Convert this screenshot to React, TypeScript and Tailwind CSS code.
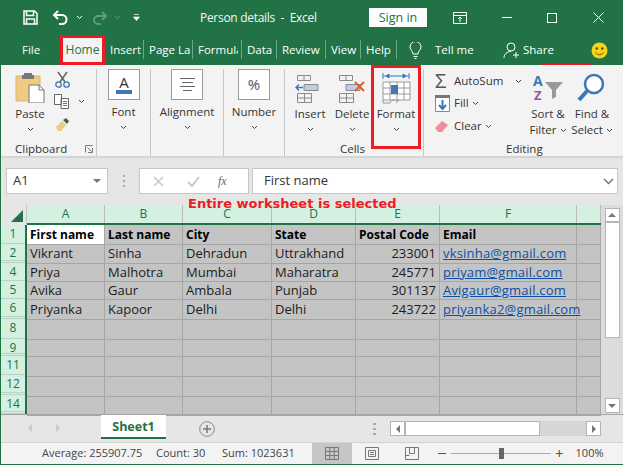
import React from 'react';

const tabs = [
  { label: 'Insert', w: 'w-[39px]', clip: 'w-[33px]' },
  { label: 'Page La', w: 'w-[49px]', clip: 'w-[41px]' },
  { label: 'Formula', w: 'w-[49px]', clip: 'w-[40px]' },
  { label: 'Data', w: 'w-[35px]', clip: 'w-[29px]' },
  { label: 'Review', w: 'w-[49px]', clip: 'w-[43px]' },
  { label: 'View', w: 'w-[35px]', clip: 'w-[29px]' },
  { label: 'Help', w: 'w-[36px]', clip: 'w-[30px]' },
];

const columns = ['A', 'B', 'C', 'D', 'E', 'F', ''];

const rowNumbers = [
  { n: '1', h: 'h-[20px] border-b' },
  { n: '2', h: 'h-[19px] border-b-[3px] border-double' },
  { n: '4', h: 'h-[18px] border-b' },
  { n: '5', h: 'h-[18px] border-b' },
  { n: '6', h: 'h-[20px] border-b-[3px] border-double' },
  { n: '8', h: 'h-[20px] border-b' },
  { n: '9', h: 'h-[17px] border-b-[3px] border-double' },
  { n: '11', h: 'h-[20px] border-b' },
  { n: '12', h: 'h-[20px] border-b-[3px] border-double' },
  { n: '14', h: 'h-[19px] border-b-[3px] border-double' },
];

const data = [
  ['First name', 'Last name', 'City', 'State', 'Postal Code', 'Email'],
  ['Vikrant', 'Sinha', 'Dehradun', 'Uttrakhand', '233001', 'vksinha@gmail.com'],
  ['Priya', 'Malhotra', 'Mumbai', 'Maharatra', '245771', 'priyam@gmail.com'],
  ['Avika', 'Gaur', 'Ambala', 'Punjab', '301137', 'Avigaur@gmail.com'],
  ['Priyanka', 'Kapoor', 'Delhi', 'Delhi', '243722', 'priyanka2@gmail.com'],
  [],
  [],
  [],
  [],
  [],
];

function Caret({ className = '' }: { className?: string }) {
  return (
    <svg width="7" height="5" viewBox="0 0 7 5" className={className}>
      <path d="M1 1l2.500 2.500L6 1" fill="none" stroke="#444" strokeWidth="1" />
    </svg>
  );
}

function Tab({ label, w, clip }: { label: string; w: string; clip: string }) {
  return (
    <div className={`${w} h-[19px] border-r border-[#6fa58a] pl-[5px] text-white text-[11.5px] leading-[19px]`}>
      <div className={`${clip} overflow-hidden whitespace-nowrap`}>{label}</div>
    </div>
  );
}

function BoxButton({ label, children, w }: { label: string; children: React.ReactNode; w: string }) {
  return (
    <div className={`${w} h-[87px] border-r border-[#c6c6c6] flex flex-col items-center shrink-0`}>
      <div className="w-[32px] h-[31px] bg-white border border-[#9a9a9a] flex items-center justify-center">{children}</div>
      <div className="text-[11.5px] leading-[16px] mt-[4px] text-[#333]">{label}</div>
      <Caret className="mt-[5px]" />
    </div>
  );
}

function TableIcon({ mark }: { mark?: boolean }) {
  return (
    <svg width="30" height="30" viewBox="0 0 30 30">
      <g fill="none" stroke="#8a8a8a">
        <path d="M2.500 2.500h13v5h-13zM2.500 20.500h14v9h-14zM9.500 20.500v9M2.500 25h14" />
        <path d="M9 2.500v5" />
      </g>
      <path d="M9 11.500h14v6H9z" fill="#b9cfe6" stroke="#8a8a8a" />
      {mark ? (
        <path d="M18 9l9 9M27 9l-9 9" stroke="#d9633a" strokeWidth="2" />
      ) : (
        <path d="M8 14.500H1M4 11.500l-3 3 3 3" stroke="#3b78b9" strokeWidth="1.500" fill="none" />
      )}
    </svg>
  );
}

function Cell({ value, row, col }: { value?: string; row: number; col: number }) {
  const first = row === 0 && col === 0;
  const link = col === 5 && row > 0;
  const number = col === 4 && row > 0;
  return (
    <div
      className={`flex items-center border-r border-b border-[#a6a6a6] px-[3px] whitespace-nowrap ${first ? 'bg-white' : 'bg-[#c4c4c4]'} ${row === 0 ? 'font-bold text-black text-[12px]' : 'text-[#1c1c1c] text-[13px]'} ${number ? 'justify-end' : ''}`}
    >
      {link ? <span className="relative z-10 text-[#0b4fa6] underline tracking-[0.2px]">{value}</span> : value}
    </div>
  );
}

export default function App() {
  return (
    <div
      className="w-[623px] h-[465px] flex flex-col overflow-hidden relative border-l border-b border-[#217346] bg-[#e6e6e6] text-[#333]"
      style={{ fontFamily: '"Open Sans", "Noto Sans", sans-serif' }}
    >
      {/* title bar */}
      <div className="h-[35px] -ml-px bg-[#217346] flex items-center text-white shrink-0 [&>*]:shrink-0">
        <div className="w-[23px]" />
        <svg width="15" height="15" viewBox="0 0 15 15">
          <path d="M1 1h10.500L14 3.500V14H1z" fill="none" stroke="#fff" strokeWidth="1.500" />
          <path d="M3.500 1v4.500h7V1M3.500 14V9h8v5" fill="none" stroke="#fff" strokeWidth="1.500" />
        </svg>
        <svg width="17" height="15" viewBox="0 0 17 15" className="ml-[14px]">
          <path d="M6 1L2 5l4 4M2 5h8a4.500 4.500 0 0 1 0 9H7" fill="none" stroke="#fff" strokeWidth="2" />
        </svg>
        <svg width="7" height="5" viewBox="0 0 7 5" className="ml-[7px]">
          <path d="M1 1l2.500 2.500L6 1" fill="none" stroke="#fff" />
        </svg>
        <svg width="15" height="14" viewBox="0 0 15 14" className="ml-[9px]">
          <path d="M10 1l4 4-4 4M14 5H6a4 4 0 0 0 0 8h3" fill="none" stroke="#5f9a7d" strokeWidth="2" />
        </svg>
        <svg width="7" height="5" viewBox="0 0 7 5" className="ml-[7px]">
          <path d="M1 1l2.500 2.500L6 1" fill="none" stroke="#5f9a7d" />
        </svg>
        <svg width="7" height="7" viewBox="0 0 7 7" className="ml-[12px]">
          <path d="M1 0.500h5M0.500 3h6L3.500 6.500z" fill="#fff" stroke="#fff" strokeWidth="0.700" />
        </svg>
        <div className="w-[169px] ml-[60px] text-[12px] tracking-[-0.3px] whitespace-pre text-[#f2f7f4]">Person details  -  Excel</div>
        <div className="w-[58px] h-[19px] bg-white text-[#217346] text-[12.5px] leading-[19px] text-center">Sign in</div>
        <svg width="14" height="12" viewBox="0 0 14 12" className="ml-[26px]">
          <path d="M.5 3.500h13v8H.5zM.5.500h13v3H.5zM7 10V5M5 7l2-2 2 2" fill="none" stroke="#fff" />
        </svg>
        <div className="w-[10px] h-px bg-white ml-[35px]" />
        <div className="w-[10px] h-[10px] border border-white ml-[35px]" />
        <svg width="11" height="11" viewBox="0 0 11 11" className="ml-[36px]">
          <path d="M.5.500l10 10M10.500.500l-10 10" stroke="#fff" />
        </svg>
      </div>

      {/* tab row */}
      <div className="h-[30px] -ml-px bg-[#217346] flex items-start shrink-0 relative [&>*]:shrink-0">
        <div className="w-[60px] pl-[22px] pt-[5px] text-white text-[11.5px] leading-[19px]">File</div>
        <div className="w-[45px] h-[30px] bg-[#f3f3f3] border-[3px] border-[#ed1c24] text-[#217346] text-[12px] leading-[24px] text-center">Home</div>
        <div className="flex pt-[5px]">
          {tabs.map((t) => (
            <Tab key={t.label} label={t.label} w={t.w} clip={t.clip} />
          ))}
        </div>
        <svg width="13" height="17" viewBox="0 0 13 17" className="ml-[12px] mt-[7px]">
          <path d="M4 12c0-3-3-4-3-7a5.500 5.500 0 0 1 11 0c0 3-3 4-3 7zM4.500 14.500h4M5.500 16.500h2" fill="none" stroke="#fff" />
        </svg>
        <div className="w-[38px] ml-[13px] pt-[5px] text-white text-[11.5px] leading-[19px] whitespace-nowrap">Tell me</div>
        <svg width="17" height="17" viewBox="0 0 17 17" className="ml-[30px] mt-[7px]">
          <circle cx="8" cy="5" r="4" fill="none" stroke="#fff" />
          <path d="M1 16c0-4 3-6.500 7-6.500M13 10v6M10 13h6" fill="none" stroke="#fff" />
        </svg>
        <div className="w-[30px] ml-[3px] pt-[5px] text-white text-[11.5px] leading-[19px]">Share</div>
        <svg width="17" height="17" viewBox="0 0 17 17" className="ml-[38px] mt-[7px]">
          <circle cx="8.500" cy="8.500" r="8" fill="#f6d21e" />
          <circle cx="5.800" cy="6.500" r="1.200" fill="#5a4a00" />
          <circle cx="11.200" cy="6.500" r="1.200" fill="#5a4a00" />
          <path d="M4.500 10.500c2 3 6 3 8 0" fill="none" stroke="#5a4a00" />
        </svg>
        <div className="absolute left-[541px] bottom-0 w-[50px] h-px bg-[#ed1c24]" />
      </div>

      {/* ribbon */}
      <div className="h-[93px] bg-[#f3f3f3] border-b-2 border-[#d4d4d4] flex shrink-0 pt-[4px]">
        <div className="w-[96px] h-[87px] border-r border-[#c6c6c6] relative shrink-0 flex">
          <div className="w-[58px] flex flex-col items-center pt-[3px]">
            <svg width="30" height="31" viewBox="0 0 30 31">
              <path d="M1 4h24v25H1z" fill="#eecb82" stroke="#dcb76a" />
              <path d="M9 3V1h8v2h2v4H7V3z" fill="#777" />
              <path d="M14 13h10l5 5v13H14z" fill="#fff" stroke="#777" />
              <path d="M24 13v5h5" fill="none" stroke="#777" />
            </svg>
            <div className="text-[11.5px] leading-[16px] mt-[3px]">Paste</div>
            <Caret className="mt-[5px]" />
          </div>
          <div className="flex flex-col items-start pt-[2px] -ml-[4px]">
            <svg width="15" height="17" viewBox="0 0 15 17">
              <path d="M3 1l7 10M12 1L5 11" stroke="#666" strokeWidth="1.500" />
              <circle cx="3.500" cy="13.500" r="2.700" fill="none" stroke="#3b78b9" strokeWidth="1.300" />
              <circle cx="11.500" cy="13.500" r="2.700" fill="none" stroke="#3b78b9" strokeWidth="1.300" />
            </svg>
            <div className="flex items-center mt-[6px] -ml-[1px]">
              <svg width="16" height="15" viewBox="0 0 16 15">
                <path d="M.5.500h7v10h-7zM7 4.500h7.500v10H7z" fill="#fff" stroke="#666" />
                <path d="M9 7.500h4M9 9.500h4M9 11.500h4" stroke="#3b78b9" />
              </svg>
              <Caret className="ml-[8px]" />
            </div>
            <svg width="16" height="15" viewBox="0 0 16 15" className="mt-[8px]">
              <path d="M1 10l6-6 4 4-5 6H3z" fill="#eecb82" />
              <path d="M8 3l3-2 3 3-2 3z" fill="#555" />
            </svg>
          </div>
          <div className="absolute left-[14px] bottom-0 text-[11.5px] leading-[14px]">Clipboard</div>
          <svg width="8" height="8" viewBox="0 0 8 8" className="absolute right-[3px] bottom-[3px]">
            <path d="M.5 7.500v-7h7M7.500 3v4.500H3M2.500 2.500l4 4" fill="none" stroke="#777" />
          </svg>
        </div>

        <BoxButton label="Font" w="w-[54px]">
          <svg width="18" height="20" viewBox="0 0 18 20">
            <text x="9" y="13" textAnchor="middle" fontSize="15" fill="#333" fontFamily="Open Sans">A</text>
            <rect x="1" y="15" width="16" height="4" fill="#3f78b5" />
          </svg>
        </BoxButton>
        <BoxButton label="Alignment" w="w-[73px]">
          <svg width="15" height="13" viewBox="0 0 15 13">
            <path d="M0 .5h15M2 4.500h11M0 8.500h15M3 12.500h9" stroke="#666" />
          </svg>
        </BoxButton>
        <BoxButton label="Number" w="w-[61px]">
          <span className="text-[15px] text-[#555]">%</span>
        </BoxButton>

        {/* cells */}
        <div className="w-[139px] h-[87px] border-r border-[#c6c6c6] shrink-0 relative flex">
          <div className="w-[50px] flex flex-col items-center pt-[4px]">
            <TableIcon />
            <div className="text-[11.5px] leading-[16px] mt-[3px]">Insert</div>
            <Caret className="mt-[5px]" />
          </div>
          <div className="w-[34px] flex flex-col items-center pt-[4px]">
            <TableIcon mark />
            <div className="text-[11.5px] leading-[16px] mt-[3px]">Delete</div>
            <Caret className="mt-[5px]" />
          </div>
          <div className="w-[50px] h-[84px] -mt-[4px] ml-[2px] border-[3px] border-[#ed1c24] flex flex-col items-center pt-[3px]">
            <svg width="29" height="33" viewBox="0 0 29 33">
              <path d="M1 5h26M1 2v6M27 2v6M4 5l3-2v4zM24 5l-3-2v4z" fill="#3b78b9" stroke="#3b78b9" />
              <path d="M1 11h27v18H1zM1 17h27M1 23h27M8 11v18M15 11v18M22 11v18" fill="#fff" stroke="#9a9a9a" />
              <rect x="9" y="14" width="7" height="9" fill="#3f78b5" />
              <path d="M1 29v3h7l2-3h7l-3 3" fill="none" stroke="#9a9a9a" />
            </svg>
            <div className="text-[11.5px] leading-[16px] mt-[2px]">Format</div>
            <Caret className="mt-[5px]" />
          </div>
          <div className="absolute left-[55px] bottom-0 text-[11.5px] leading-[14px]">Cells</div>
        </div>

        {/* editing */}
        <div className="flex-1 h-[87px] relative flex">
          <div className="w-[100px] pl-[11px] pt-[2px] flex flex-col">
            <div className="flex items-center h-[20px]">
              <span className="w-[20px] text-[20px] leading-[20px] text-[#555]">Σ</span>
              <span className="text-[11.5px] ml-[-1px]">AutoSum</span>
              <Caret className="ml-[12px]" />
            </div>
            <div className="flex items-center h-[24px]">
              <svg width="15" height="17" viewBox="0 0 15 17">
                <path d="M.5 2.500h14v14H.5z" fill="#fff" stroke="#888" />
                <path d="M0 0h15v3H0z" fill="#777" />
                <path d="M7.500 5v9M4 10l3.500 4 3.500-4" fill="none" stroke="#3b78b9" strokeWidth="2" />
              </svg>
              <span className="text-[11.5px] ml-[4px]">Fill</span>
              <Caret className="ml-[3px]" />
            </div>
            <div className="flex items-center h-[22px]">
              <svg width="14" height="11" viewBox="0 0 14 11">
                <path d="M0 7l7-7 6 4-6 7H3z" fill="#ee8d9b" />
              </svg>
              <span className="text-[11.5px] ml-[5px]">Clear</span>
              <Caret className="ml-[3px]" />
            </div>
          </div>
          <div className="w-[48px] flex flex-col items-center pt-[4px]">
            <svg width="40" height="30" viewBox="0 0 40 30">
              <text x="5" y="13" fontSize="14" fontWeight="700" fill="#3b78b9" fontFamily="Open Sans">A</text>
              <text x="6" y="27" fontSize="13" fontWeight="700" fill="#8a5cb0" fontFamily="Open Sans">Z</text>
              <path d="M17 9h18l-7 8v7l-4 2v-9z" fill="#999" />
            </svg>
            <div className="text-[11.5px] leading-[16px] mt-[3px]">Sort &amp;</div>
            <div className="text-[11.5px] leading-[16px] whitespace-nowrap">Filter <Caret className="inline" /></div>
          </div>
          <div className="w-[40px] flex flex-col items-center pt-[4px]">
            <svg width="30" height="30" viewBox="0 0 30 30">
              <circle cx="17" cy="11" r="9" fill="#fff" stroke="#3b78b9" strokeWidth="2.500" />
              <path d="M10 18L2 27" stroke="#3b78b9" strokeWidth="4" />
            </svg>
            <div className="text-[11.5px] leading-[16px] mt-[3px] whitespace-nowrap">Find &amp;</div>
            <div className="text-[11.5px] leading-[16px] whitespace-nowrap">Select <Caret className="inline" /></div>
          </div>
          <div className="absolute left-[82px] bottom-0 text-[11.5px] leading-[14px]">Editing</div>
        </div>
      </div>

      {/* formula bar */}
      <div className="h-[47px] flex items-start pt-[10px] pl-[5px] shrink-0">
        <div className="w-[102px] h-[26px] bg-white border border-[#c6c6c6] flex items-center justify-between px-[6px]">
          <span className="text-[13px]">A1</span>
          <div className="w-0 h-0 border-l-[4px] border-r-[4px] border-t-[4px] border-l-transparent border-r-transparent border-t-[#777]" />
        </div>
        <div className="w-[31px] h-[26px] flex flex-col items-center justify-center gap-[3px]">
          <div className="w-[2px] h-[2px] bg-[#aaa]" />
          <div className="w-[2px] h-[2px] bg-[#aaa]" />
          <div className="w-[2px] h-[2px] bg-[#aaa]" />
        </div>
        <div className="w-[110px] h-[26px] bg-white border border-[#c6c6c6] flex items-center pl-[13px]">
          <svg width="11" height="11" viewBox="0 0 11 11">
            <path d="M1 1l9 9M10 1l-9 9" stroke="#c8c8c8" strokeWidth="1.500" />
          </svg>
          <svg width="13" height="11" viewBox="0 0 13 11" className="ml-[23px]">
            <path d="M1 6l4 4 7-9" fill="none" stroke="#c8c8c8" strokeWidth="2" />
          </svg>
          <span className="ml-[18px] text-[12px] italic text-[#666]" style={{ fontFamily: '"Liberation Serif", serif' }}>fx</span>
        </div>
        <div className="w-[366px] h-[26px] ml-[3px] bg-white border border-[#c6c6c6] flex items-center justify-between pl-[11px] pr-[3px]">
          <span className="text-[13px]">First name</span>
          <svg width="11" height="7" viewBox="0 0 11 7">
            <path d="M1 1l4.500 4.500L10 1" fill="none" stroke="#777" strokeWidth="1.500" />
          </svg>
        </div>
      </div>

      {/* sheet */}
      <div className="flex-1 min-h-0 flex">
        <div className="flex-1 flex flex-col">
          <div className="flex h-[20px] shrink-0">
            <div className="w-[26px] h-[20px] border-r border-[#c6c6c6] bg-[#e6e6e6] flex items-end justify-end pb-[3px] pr-[3px]">
              <div className="w-0 h-0 border-b-[12px] border-l-[12px] border-b-[#217346] border-l-transparent" />
            </div>
            <div className="flex-1 grid grid-cols-[78px_78px_89px_84px_84px_137px_24px] border-b-2 border-[#217346]">
              {columns.map((c, i) => (
                <div key={i} className="bg-[#d3f0e0] border-r border-[#bcbcbc] text-center text-[12px] leading-[18px] text-[#217346]">{c}</div>
              ))}
            </div>
          </div>
          <div className="flex flex-1 min-h-0">
            <div className="w-[26px] border-r-2 border-[#217346] bg-[#d3f0e0] flex flex-col shrink-0">
              {rowNumbers.map((r) => (
                <div key={r.n} className={`${r.h} border-[#b8d2c4] text-center text-[12px] leading-[17px] text-[#217346]`}>{r.n}</div>
              ))}
            </div>
            <div className="flex-1 grid grid-cols-[78px_78px_89px_84px_84px_137px_24px] grid-rows-[20px_19px_18px_18px_20px_20px_17px_20px_20px_19px]">
              {data.map((row, r) =>
                columns.map((_, c) => <Cell key={`${r}-${c}`} value={row[c]} row={r} col={c} />)
              )}
            </div>
          </div>
        </div>
        <div className="w-[22px] shrink-0 bg-[#dcdcdc] flex flex-col items-center pt-[3px]">
          <div className="w-[15px] h-[14px] bg-white border border-[#b4b4b4] flex items-center justify-center">
            <div className="w-0 h-0 border-l-[4px] border-r-[4px] border-b-[4px] border-l-transparent border-r-transparent border-b-[#777]" />
          </div>
          <div className="w-[15px] h-[116px] bg-white border border-[#b4b4b4]" />
          <div className="flex-1" />
          <div className="w-[15px] h-[15px] bg-white border border-[#b4b4b4] flex items-center justify-center">
            <div className="w-0 h-0 border-l-[4px] border-r-[4px] border-t-[4px] border-l-transparent border-r-transparent border-t-[#777]" />
          </div>
          <div className="h-px" />
        </div>
      </div>

      {/* sheet tabs */}
      <div className="h-[28px] shrink-0 flex items-start border-t border-[#a6a6a6] relative">
        <div className="w-0 h-0 mt-[9px] ml-[27px] border-t-[4px] border-b-[4px] border-r-[4px] border-t-transparent border-b-transparent border-r-[#c8c8c8]" />
        <div className="w-0 h-0 mt-[9px] ml-[24px] border-t-[4px] border-b-[4px] border-l-[4px] border-t-transparent border-b-transparent border-l-[#c8c8c8]" />
        <div className="w-[65px] h-[24px] ml-[41px] bg-white border-b-2 border-[#217346] text-center text-[12.5px] leading-[24px] font-bold text-[#217346]">Sheet1</div>
        <svg width="16" height="16" viewBox="0 0 16 16" className="ml-[33px] mt-[6px]">
          <circle cx="8" cy="8" r="7.300" fill="none" stroke="#8a8a8a" />
          <path d="M4 8h8M8 4v8" stroke="#777" strokeWidth="1.500" />
        </svg>
        <div className="ml-[158px] mt-[8px] flex flex-col gap-[3px]">
          <div className="w-[3px] h-[2px] bg-[#aaa]" />
          <div className="w-[3px] h-[2px] bg-[#aaa]" />
          <div className="w-[3px] h-[2px] bg-[#aaa]" />
        </div>
        <div className="ml-[14px] mt-[6px] w-[211px] h-[15px] flex bg-[#d6d6d6]">
          <div className="w-[15px] h-[15px] bg-white border border-[#b4b4b4] flex items-center justify-center">
            <div className="w-0 h-0 border-t-[4px] border-b-[4px] border-r-[4px] border-t-transparent border-b-transparent border-r-[#777]" />
          </div>
          <div className="w-[135px] h-[15px] bg-white border border-[#b4b4b4]" />
          <div className="flex-1" />
          <div className="w-[15px] h-[15px] bg-white border border-[#b4b4b4] flex items-center justify-center">
            <div className="w-0 h-0 border-t-[4px] border-b-[4px] border-l-[4px] border-t-transparent border-b-transparent border-l-[#777]" />
          </div>
        </div>
      </div>

      {/* status bar */}
      <div className="h-[22px] shrink-0 bg-[#f3f3f3] border-t border-[#d4d4d4] flex items-center text-[11px] text-[#444]">
        <span className="ml-[41px] w-[114px] whitespace-nowrap">Average: 255907.75</span>
        <span className="w-[66px] whitespace-nowrap">Count: 30</span>
        <span className="w-[90px] whitespace-nowrap">Sum: 1023631</span>
        <div className="w-[40px] h-[22px] bg-[#c6c6c6] flex items-center justify-center">
          <svg width="14" height="13" viewBox="0 0 14 13">
            <path d="M.5.500h13v12H.5zM.5 4.500h13M.5 8.500h13M4.800.500v12M9.200.500v12" fill="none" stroke="#777" />
          </svg>
        </div>
        <svg width="14" height="13" viewBox="0 0 14 13" className="ml-[13px]">
          <path d="M.5.500h13v12H.5zM3.500 3.500h7v6h-7zM5 5.500h4M5 7.500h4" fill="none" stroke="#777" />
        </svg>
        <svg width="14" height="13" viewBox="0 0 14 13" className="ml-[26px]">
          <path d="M.5.500h13v12H.5zM4.500.500v6h5v-6M.5 8.500h4" fill="none" stroke="#777" />
        </svg>
        <div className="ml-[19px] w-[8px] h-px bg-[#555]" />
        <div className="ml-[5px] w-[100px] h-px bg-[#aaa] relative">
          <div className="absolute left-[48px] -top-[5px] w-[5px] h-[11px] bg-[#666]" />
        </div>
        <span className="ml-[4px] text-[15px] leading-[15px] text-[#555]">+</span>
        <span className="ml-[12px] text-[11px]">100%</span>
      </div>

      {/* annotation written on the screenshot */}
      <div
        className="absolute left-[187px] top-[196px] z-20 text-[13px] leading-[16px] text-[#ed1c24] font-bold whitespace-nowrap"
        style={{ fontFamily: '"DejaVu Sans", sans-serif' }}
      >
        Entire worksheet is selected
      </div>
    </div>
  );
}
